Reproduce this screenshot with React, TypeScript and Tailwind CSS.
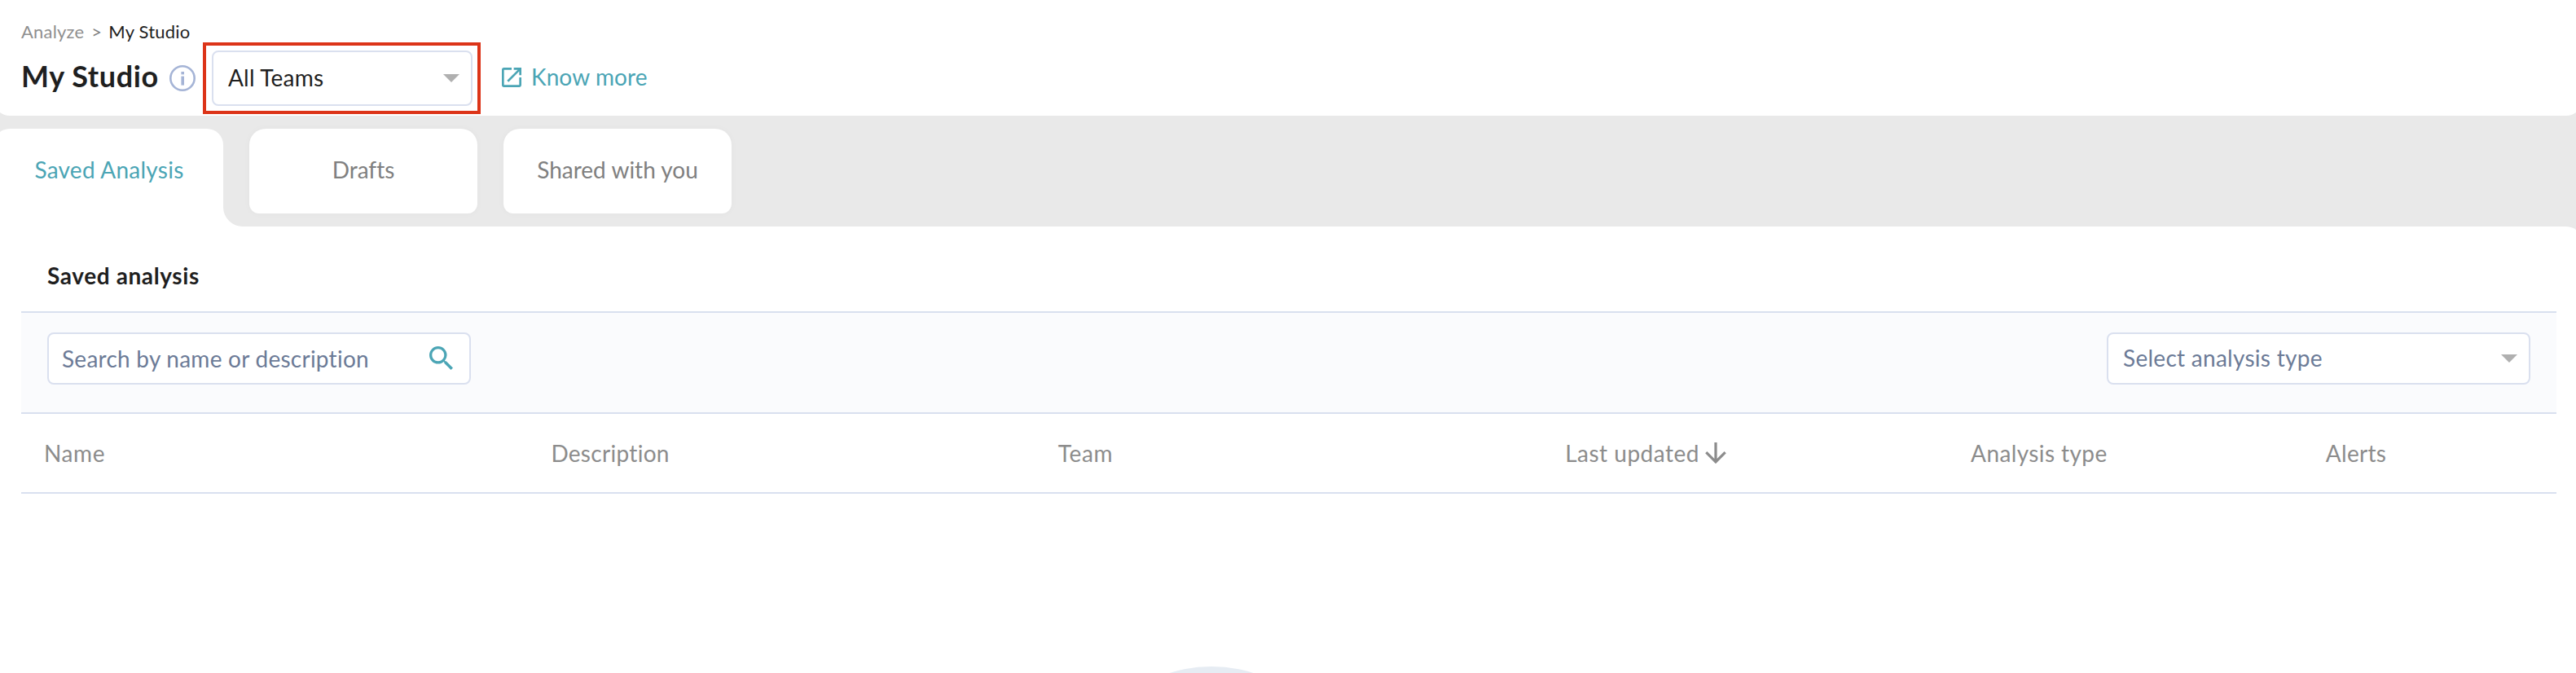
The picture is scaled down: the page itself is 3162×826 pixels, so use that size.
import type { ReactNode } from "react";

function Caret() {
  return (
    <svg width="20" height="10" viewBox="0 0 20 10" className="shrink-0">
      <path d="M0 0h20L10 10z" fill="#b0b0b0" />
    </svg>
  );
}

function InfoIcon() {
  return (
    <svg width="32" height="32" viewBox="0 0 32 32" fill="#a5b4d6" className="shrink-0">
      <circle cx="16" cy="16" r="14.7" fill="none" stroke="#a5b4d6" strokeWidth="2.6" />
      <rect x="14.4" y="8" width="3.6" height="3.4" />
      <rect x="14.4" y="13.6" width="3.6" height="11" />
    </svg>
  );
}

function OpenIcon() {
  return (
    <svg width="24" height="24" viewBox="3 3 18 18" fill="#4ba5b5" className="shrink-0">
      <path d="M19 19H5V5h7V3H5a2 2 0 0 0-2 2v14a2 2 0 0 0 2 2h14c1.1 0 2-.9 2-2v-7h-2v7zM14 3v2h3.59l-9.83 9.83 1.41 1.41L19 6.41V10h2V3h-7z" />
    </svg>
  );
}

function SearchIcon() {
  return (
    <svg width="29" height="29" viewBox="3 3 17.49 17.49" fill="#4ba5b5" className="shrink-0">
      <path d="M15.5 14h-.79l-.28-.27A6.471 6.471 0 0 0 16 9.5 6.5 6.5 0 1 0 9.5 16c1.61 0 3.09-.59 4.23-1.57l.27.28v.79l5 4.99L20.49 19l-4.99-5zm-6 0C7.01 14 5 11.99 5 9.5S7.01 5 9.5 5 14 7.01 14 9.5 11.99 14 9.5 14z" />
    </svg>
  );
}

function SortIcon() {
  return (
    <svg width="26" height="26" viewBox="0 0 26 26" fill="none" stroke="#8c8c8c" strokeWidth="3.2" className="ml-[7px] shrink-0">
      <path d="M13 0v23.5M1.3 12.2 13 23.9l11.7-11.7" />
    </svg>
  );
}

function Tab({ children }: { children: ReactNode }) {
  return (
    <button className="flex h-[104px] w-[280px] items-start justify-center rounded-t-[20px] rounded-b-[12px] bg-white leading-[100px] text-[#808080] shadow-[0_0_8px_rgba(0,0,0,0.03)]">
      {children}
    </button>
  );
}

export default function App() {
  return (
    <div className="h-[826px] w-full overflow-hidden bg-[#e9e9e9] font-['Lato','Liberation_Sans',sans-serif] text-[28px] text-[#1f1f1f] [font-variant-ligatures:none]">
      <div className="-mx-2">
        <header className="h-[142px] rounded-b-[20px] bg-white pl-[34px]">
          <nav className="flex h-[52px] items-end text-[22px] leading-[26px]">
            <span className="tracking-[0.2px] text-[#8f8f8f]">Analyze</span>
            <span className="ml-[9px] w-[21px] text-[#808080]">&gt;</span>
            <span className="tracking-[0.2px]">My Studio</span>
          </nav>
          <div className="flex h-[88px] items-center">
            <h1 className="w-[174px] pb-[7px] text-[36px] leading-[44px] font-bold tracking-[0.6px] whitespace-nowrap">
              My Studio
            </h1>
            <span className="ml-2">
              <InfoIcon />
            </span>
            <div className="ml-[9px] flex h-[88px] w-[341px] border-4 border-[#dc3418] pt-1.5 pl-[7px]">
              <button className="flex h-[68px] w-[320px] items-center justify-between rounded-lg border-2 border-[#dae0ef] bg-white pr-[14px] pl-[18px]">
                <span className="pb-[3px] tracking-[0.2px]">All Teams</span>
                <Caret />
              </button>
            </div>
            <a className="ml-[26px] flex items-center pb-[2px] text-[#4ba5b5]">
              <OpenIcon />
              <span className="ml-3 pb-[3px] tracking-[0.1px]">Know more</span>
            </a>
          </div>
        </header>

        <div className="flex h-[136px] pt-4">
          <button className="flex h-[120px] w-[282px] items-start justify-center rounded-t-[20px] bg-white pl-[2px] leading-[100px] tracking-[0.25px] text-[#4ba5b5]">
            Saved Analysis
          </button>
          <div className="flex w-8 items-end">
            <svg width="24" height="24" viewBox="0 0 24 24">
              <path d="M0 0a24 24 0 0 0 24 24H0z" fill="#fff" />
            </svg>
          </div>
          <Tab>Drafts</Tab>
          <div className="w-8" />
          <Tab>Shared with you</Tab>
        </div>

        <main className="h-[548px] rounded-tr-[20px] bg-white pr-8 pl-[34px]">
          <h2 className="flex h-[104px] items-center pt-[15px] pl-8 font-bold tracking-[0.6px]">
            Saved analysis
          </h2>
          <div className="flex h-[126px] justify-between border-y-2 border-[#d9e0ef] bg-[#fafbfd] px-8 pt-6">
            <div className="flex h-16 w-[520px] items-center justify-between rounded-lg border-2 border-[#dae0ef] bg-white pr-5 pl-4 text-[#6c7b97]">
              <span className="tracking-[0.25px]">Search by name or description</span>
              <span className="pb-[2px]">
                <SearchIcon />
              </span>
            </div>
            <button className="flex h-16 w-[520px] items-center justify-between rounded-lg border-2 border-[#dae0ef] bg-white pr-[14px] pl-[18px] text-[#6c7b97]">
              <span className="pb-[3px] tracking-[0.28px]">Select analysis type</span>
              <Caret />
            </button>
          </div>
          <div className="grid h-[98px] grid-cols-[20fr_20fr_20fr_16fr_14fr_10fr] items-center border-b-2 border-[#d9e0ef] text-[#8c8c8c] *:pl-7">
            <div className="tracking-[0.6px]">Name</div>
            <div className="tracking-[0.3px]">Description</div>
            <div className="tracking-[0.6px]">Team</div>
            <div className="flex items-center tracking-[0.5px]">
              Last updated
              <SortIcon />
            </div>
            <div className="tracking-[0.4px]">Analysis type</div>
            <div className="tracking-[0.3px]">Alerts</div>
          </div>
          <div className="h-[220px] overflow-hidden pt-[212px] pl-[1291px]">
            <div className="size-[340px] rounded-full bg-[#e6ecf3]" />
          </div>
        </main>
      </div>
    </div>
  );
}
